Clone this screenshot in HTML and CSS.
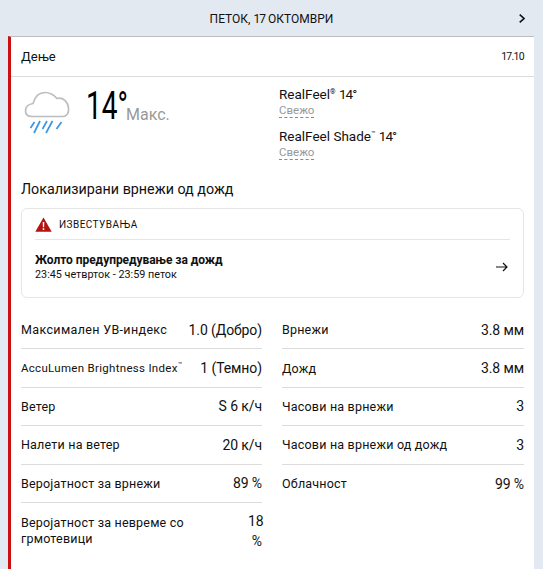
FILE: index.html
```html
<!DOCTYPE html>
<html lang="mk">
<head>
    <meta charset="UTF-8">
    <meta name="viewport" content="width=device-width, initial-scale=1.0">
    <title>Петок, 17 октомври</title>
    <link rel="stylesheet" href="styles.css">
</head>
<body>
    <div class="top-bar">
        <span></span>
        <span class="top-title">ПЕТОК, <span class="num">17</span> ОКТОМВРИ</span>
        <svg class="top-next" width="6" height="9" viewBox="0 0 6 9"><path d="M0.7 0.7 L5 4.500 L0.7 8.300" fill="none" stroke="#111" stroke-width="1.600"/></svg>
    </div>
    <div class="card">
        <div class="card-header">
            <span class="part">Дење</span>
            <span class="date">17.10</span>
        </div>
        <div class="summary">
            <div class="summary-left">
                <svg class="weather-icon" width="46" height="46" viewBox="0 0 46 46">
                    <path d="M8 27.500 C3.500 27.500 1.500 25 1.500 22 C1.500 18 4.500 15 9 14.500 C11 7.500 15 3.500 21 3.500 C26 3.500 30 6 33 9.500 C39 8 44 13 44.500 19 C45 24 43 27.500 38.500 27.500 Z" fill="none" stroke="#bdbdbd" stroke-width="1.700"/>
                    <path d="M10.500 33 L6.500 39 M16 32 L10 44 M23 32 L18.500 40 M28.500 32 L22 44 M37.500 33 L32.500 40" fill="none" stroke="#3d96e0" stroke-width="1.700"/>
                </svg>
                <div class="temp-box"><div class="temp">14°</div></div>
                <div class="temp-label">Макс.</div>
            </div>
            <div class="realfeel">
                <div class="feel-row">
                    <div class="feel-value">RealFeel<sup>®</sup> <span class="num">14°</span></div>
                    <span class="feel-note">Свежо</span>
                </div>
                <div class="feel-row">
                    <div class="feel-value">RealFeel Shade<sup>™</sup> <span class="num">14°</span></div>
                    <span class="feel-note">Свежо</span>
                </div>
            </div>
        </div>
        <div class="phrase">Локализирани врнежи од дожд</div>
        <div class="alert">
            <div class="alert-head">
                <svg width="17" height="15" viewBox="0 0 17 15"><path d="M8.500 0.500 L16.700 14.800 L0.300 14.800 Z" fill="#b51212"/><path d="M7.700 5 H9.300 L9.100 10.300 H7.900 Z M7.700 11.300 H9.300 V13 H7.700 Z" fill="#fff"/></svg>
                <span>ИЗВЕСТУВАЊА</span>
            </div>
            <div class="alert-body">
                <div>
                    <div class="alert-title">Жолто предупредување за дожд</div>
                    <div class="alert-time">23:45 четврток - 23:59 петок</div>
                </div>
                <svg class="alert-arrow" width="12" height="10" viewBox="0 0 12 10"><path d="M0 5 H11 M7 1 L11 5 L7 9" fill="none" stroke="#111" stroke-width="1.200"/></svg>
            </div>
        </div>
        <div class="details">
            <div class="detail-col">
                <div class="detail-row"><span class="wide-label">Максимален УВ-индекс</span><span class="val">1.0 (Добро)</span></div>
                <div class="detail-row"><span class="small-label">AccuLumen Brightness Index<sup>™</sup></span><span class="val">1 (Темно)</span></div>
                <div class="detail-row"><span>Ветер</span><span class="val">S 6 к/ч</span></div>
                <div class="detail-row"><span>Налети на ветер</span><span class="val">20 к/ч</span></div>
                <div class="detail-row"><span>Веројатност за врнежи</span><span class="val">89 %</span></div>
                <div class="detail-row tall"><span class="wrap-label">Веројатност за невреме со грмотевици</span><span class="val wrap-val">18 %</span></div>
            </div>
            <div class="detail-col">
                <div class="detail-row"><span>Врнежи</span><span class="val">3.8 мм</span></div>
                <div class="detail-row"><span>Дожд</span><span class="val">3.8 мм</span></div>
                <div class="detail-row"><span>Часови на врнежи</span><span class="val">3</span></div>
                <div class="detail-row"><span>Часови на врнежи од дожд</span><span class="val">3</span></div>
                <div class="detail-row"><span>Облачност</span><span class="val">99 %</span></div>
            </div>
        </div>
    </div>
</body>
</html>
```

FILE: styles.css
```css
body {
    margin: 0;
    height: 569px;
    overflow: hidden;
    background-color: #e3e9f1;
    color: #111;
    font-family: "Roboto", "Liberation Sans", sans-serif;
}
.num {
    letter-spacing: -0.9px;
}
.top-bar {
    height: 36px;
    display: grid;
    grid-template-columns: 1fr auto 1fr;
    align-items: center;
    font-size: 12px;
    padding-top: 1px;
    box-sizing: border-box;
}
.top-next {
    justify-self: end;
    margin-right: 18px;
}
.card {
    margin-left: 8px;
    margin-right: 9px;
    height: 533px;
    background-color: #fff;
    border-top: 1px solid #bdbdbd;
    border-left: 3px solid #cc1010;
    box-sizing: border-box;
}
.card-header {
    height: 39px;
    padding: 0 10px;
    display: flex;
    align-items: center;
    justify-content: space-between;
    border-bottom: 1px solid #dcdcdc;
    font-size: 13px;
}
.date {
    font-size: 10.500px;
    letter-spacing: -0.7px;
}
.summary {
    display: flex;
    padding: 8px 10px 0;
    height: 98px;
    box-sizing: border-box;
}
.summary-left {
    width: 258px;
    display: flex;
    align-items: flex-start;
}
.weather-icon {
    margin-top: 4px;
    margin-right: 16px;
    margin-left: 3px;
}
.temp-box {
    width: 40px;
}
.temp {
    font-size: 39px;
    line-height: 42px;
    color: #000;
    white-space: nowrap;
    transform: scaleX(0.72);
    transform-origin: left center;
}
.temp-label {
    font-size: 16px;
    color: #999;
    margin-top: 20px;
}
.realfeel {
    padding-top: 1px;
}
.feel-row {
    margin-bottom: 10px;
}
.feel-value {
    font-size: 13.500px;
    line-height: 17px;
}
sup {
    font-size: 7px;
    line-height: 0;
}
.feel-note {
    display: block;
    width: fit-content;
    margin-top: 1px;
    font-size: 11.500px;
    color: #999;
    border-bottom: 1px dashed #888;
    line-height: 13px;
}
.phrase {
    padding: 0 10px;
    font-size: 14.300px;
    line-height: 24px;
    height: 31px;
    margin-top: 2px;
}
.alert {
    margin: 0 10px;
    height: 90px;
    border: 1px solid #e6e6e6;
    border-radius: 6px;
    padding: 0 13px;
    box-sizing: border-box;
}
.alert-head {
    height: 30px;
    display: flex;
    align-items: center;
    gap: 7px;
    font-size: 10px;
    letter-spacing: 0.45px;
    border-bottom: 1px solid #e6e6e6;
}
.alert-body {
    display: flex;
    align-items: center;
    justify-content: space-between;
    padding-top: 12px;
}
.alert-arrow {
    margin-right: 2px;
}
.alert-title {
    font-size: 12px;
    font-weight: 700;
    line-height: 16px;
    letter-spacing: -0.05px;
}
.alert-time {
    font-size: 10.800px;
    line-height: 14px;
}
.details {
    display: grid;
    grid-template-columns: 241px 242px;
    gap: 20px;
    padding: 13px 0 0 10px;
}
.detail-row {
    display: flex;
    align-items: center;
    justify-content: space-between;
    height: 38.400px;
    box-sizing: border-box;
    border-bottom: 1px solid #dcdcdc;
    font-size: 12.500px;
    letter-spacing: 0.2px;
}
.detail-col .detail-row:last-child {
    border-bottom: none;
}
.tall {
    height: 56px;
}
.val {
    font-size: 14px;
    letter-spacing: -0.1px;
    white-space: nowrap;
}
.wide-label {
    letter-spacing: 0.35px;
}
.small-label {
    font-size: 11.500px;
    letter-spacing: 0.3px;
}
.wrap-label {
    width: 190px;
    line-height: 16px;
}
.wrap-val {
    white-space: normal;
    width: 14px;
    text-align: right;
    line-height: 20px;
}
```
